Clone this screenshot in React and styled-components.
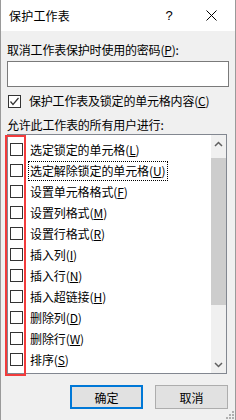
import React from 'react'
import styled, { createGlobalStyle } from 'styled-components'

const Global = createGlobalStyle`
  html, body { margin: 0; padding: 0; background: #f0f0f0; }
  body {
    font-family: "Noto Sans CJK SC", "Noto Sans", "Liberation Sans", sans-serif;
    font-size: 12px;
    color: #000;
  }
`

const Window = styled.div`
  position: relative;
  width: 236px;
  height: 420px;
  box-sizing: border-box;
  border-left: 1px solid #9a9a9a;
  border-right: 1px solid #9a9a9a;
  background: #f0f0f0;
  overflow: hidden;
`

const TitleBar = styled.div`
  height: 31px;
  background: #fff;
  display: flex;
  align-items: center;
  padding-left: 8px;
  padding-right: 1px;
  font-size: 12px;
`

const Title = styled.div`
  flex: 1;
  letter-spacing: 0.2px;
`

const TitleBtn = styled.div`
  width: ${p => p.$w}px;
  margin-right: ${p => p.$mr || 0}px;
  height: 31px;
  display: flex;
  align-items: center;
  justify-content: center;
  font-size: 13px;
  font-family: "Liberation Sans", sans-serif;
`

const Body = styled.div`
  padding: 11px 6px 0 6px;
  display: flex;
  flex-direction: column;
`

const Label = styled.div`
  line-height: 16px;
  height: 16px;
  white-space: nowrap;
  letter-spacing: -0.2px;
`

const Key = styled.span`
  text-decoration: underline;
  text-underline-offset: 1px;
`

const Input = styled.div`
  margin-top: 3px;
  height: 26px;
  box-sizing: border-box;
  width: 222px;
  background: #fff;
  border: 1px solid #7a7a7a;
`

const CheckRow = styled.div`
  margin-top: 6px;
  display: flex;
  align-items: center;
  gap: 8px;
  height: 16px;
  padding-left: 1px;
`

const Box = styled.div`
  width: 13px;
  height: 13px;
  box-sizing: border-box;
  border: 1px solid #333;
  background: #fff;
  flex: none;
  display: flex;
  align-items: center;
  justify-content: center;
`

const AllowLabel = styled(Label)`
  margin-top: 8px;
`

const ListWrap = styled.div`
  position: relative;
  margin-top: 1px;
`

const ListBox = styled.div`
  width: 220px;
  height: 240px;
  box-sizing: border-box;
  border: 1px solid #828790;
  background: #fff;
  display: flex;
`

const Items = styled.div`
  flex: 1;
  padding-top: 4px;
`

const Item = styled.div`
  height: 21px;
  display: flex;
  align-items: center;
  padding-left: 2px;
  gap: 5px;
`

const ItemText = styled.span`
  line-height: 18px;
  padding: 0 1px;
  border: 1px dotted ${p => (p.$focus ? '#000' : 'transparent')};
  white-space: nowrap;
  letter-spacing: -0.1px;
`

const ScrollBar = styled.div`
  width: 15px;
  background: #f0f0f0;
  display: flex;
  flex-direction: column;
`

const Arrow = styled.div`
  height: 17px;
  display: flex;
  align-items: center;
  justify-content: center;
`

const Track = styled.div`
  flex: 1;
  display: flex;
  flex-direction: column;
`

const Thumb = styled.div`
  height: 147px;
  background: #cdcdcd;
  margin-top: 6px;
`

const RedMark = styled.div`
  position: absolute;
  left: -2px;
  top: 1px;
  width: 21px;
  height: 241px;
  box-sizing: border-box;
  border: 2px solid #f23c3c;
  pointer-events: none;
`

const Buttons = styled.div`
  margin-top: 11px;
  display: flex;
  justify-content: flex-end;
  gap: 12px;
  padding-right: 1px;
`

const Button = styled.div`
  width: 73px;
  height: 24px;
  box-sizing: border-box;
  background: #e1e1e1;
  border: ${p => (p.$primary ? '2px solid #0078d7' : '1px solid #adadad')};
  display: flex;
  align-items: center;
  justify-content: center;
  font-size: 12px;
`

const Grip = styled.svg`
  position: absolute;
  right: 1px;
  bottom: 1px;
`

const items = [
  ['选定锁定的单元格', 'L'],
  ['选定解除锁定的单元格', 'U'],
  ['设置单元格格式', 'F'],
  ['设置列格式', 'M'],
  ['设置行格式', 'R'],
  ['插入列', 'I'],
  ['插入行', 'N'],
  ['插入超链接', 'H'],
  ['删除列', 'D'],
  ['删除行', 'W'],
  ['排序', 'S'],
]

export default function App() {
  return (
    <Window>
      <Global />
      <TitleBar>
        <Title>保护工作表</Title>
        <TitleBtn $w={20} $mr={9}>?</TitleBtn>
        <TitleBtn $w={46}>
          <svg width="11" height="11" viewBox="0 0 11 11">
            <path d="M0.5 0.5 L10.5 10.5 M10.5 0.5 L0.5 10.5" stroke="#000" strokeWidth="1" />
          </svg>
        </TitleBtn>
      </TitleBar>
      <Body>
        <Label>取消工作表保护时使用的密码(<Key>P</Key>):</Label>
        <Input />
        <CheckRow>
          <Box>
            <svg width="11" height="11" viewBox="0 0 11 11">
              <path d="M1.5 5.5 L4 8.5 L9.5 2" stroke="#333" strokeWidth="1.2" fill="none" />
            </svg>
          </Box>
          <Label>保护工作表及锁定的单元格内容(<Key>C</Key>)</Label>
        </CheckRow>
        <AllowLabel>允许此工作表的所有用户进行:</AllowLabel>
        <ListWrap>
          <ListBox>
            <Items>
              {items.map(([t, k], i) => (
                <Item key={t}>
                  <Box />
                  <ItemText $focus={i === 1}>
                    {t}(<Key>{k}</Key>)
                  </ItemText>
                </Item>
              ))}
            </Items>
            <ScrollBar>
              <Arrow>
                <svg width="9" height="6" viewBox="0 0 9 6">
                  <path d="M1 5 L4.5 1.5 L8 5" stroke="#606060" strokeWidth="1.5" fill="none" />
                </svg>
              </Arrow>
              <Track>
                <Thumb />
              </Track>
              <Arrow>
                <svg width="9" height="6" viewBox="0 0 9 6">
                  <path d="M1 1 L4.5 4.5 L8 1" stroke="#606060" strokeWidth="1.5" fill="none" />
                </svg>
              </Arrow>
            </ScrollBar>
          </ListBox>
          <RedMark />
        </ListWrap>
        <Buttons>
          <Button $primary>确定</Button>
          <Button>取消</Button>
        </Buttons>
      </Body>
      <Grip width="9" height="9" viewBox="0 0 9 9">
        <g fill="#b0b0b0">
          <rect x="7" y="1" width="2" height="2" />
          <rect x="4" y="4" width="2" height="2" />
          <rect x="7" y="4" width="2" height="2" />
          <rect x="1" y="7" width="2" height="2" />
          <rect x="4" y="7" width="2" height="2" />
          <rect x="7" y="7" width="2" height="2" />
        </g>
      </Grip>
    </Window>
  )
}
